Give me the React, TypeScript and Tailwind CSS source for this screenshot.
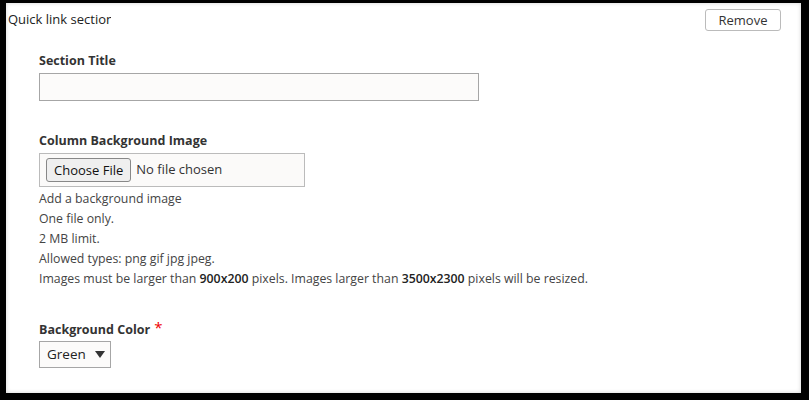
export default function App() {
  const font = { fontFamily: '"Open Sans", "Liberation Sans", sans-serif' }
  return (
    <div className="w-[809px] h-[400px] bg-black pt-[3px] pl-[6px] pr-[8px] pb-[7px]" style={font}>
      <div className="relative h-full w-full bg-white shadow-[inset_0_0_4px_rgba(0,0,0,0.18)]">
        <div className="flex items-start justify-between">
          <div className="mt-[8px] ml-[2px] w-[103px] overflow-hidden whitespace-nowrap text-[13px] leading-[16px] text-[#222]">
            Quick link section
          </div>
          <button className="mt-[6px] mr-[20px] h-[22px] w-[76px] rounded-[3px] border border-[#bbb] bg-white text-[13px] leading-[20px] text-[#333]">
            Remove
          </button>
        </div>

        <div className="pl-[33px]">
          <div className="mt-[22px] text-[12.5px] font-bold leading-[16px] text-[#333]">Section Title</div>
          <div className="mt-[4px] h-[28px] w-[440px] border border-[#a6a6a6] bg-[#fcfbfa]" />

          <div className="mt-[32px] text-[12.5px] font-bold leading-[16px] text-[#333]">Column Background Image</div>
          <div className="mt-[4px] flex h-[34px] w-[266px] items-center border border-[#bbb] bg-[#fbfaf9] pl-[6px]">
            <div className="h-[24px] rounded-[3px] border border-[#888] bg-[#efefef] px-[7px] text-[13px] leading-[22px] text-[#111]">
              Choose File
            </div>
            <span className="ml-[5px] text-[13px] text-[#333]">No file chosen</span>
          </div>
          <div className="mt-[2px] text-[12.3px] leading-[20px] text-[#444]">
            <div>Add a background image</div>
            <div>One file only.</div>
            <div>2 MB limit.</div>
            <div>Allowed types: png gif jpg jpeg.</div>
            <div>
              Images must be larger than <b className="font-semibold text-[#222]">900x200</b> pixels. Images larger than{' '}
              <b className="font-semibold text-[#222]">3500x2300</b> pixels will be resized.
            </div>
          </div>

          <div className="mt-[33px] flex items-start text-[12.5px] font-bold leading-[16px] text-[#333]">
            Background Color
            <span className="ml-[4px] -mt-[3px] text-[15px] font-normal text-[#e00]">*</span>
          </div>
          <div className="mt-[3px] flex h-[27px] w-[72px] items-center border border-[#a6a6a6] bg-[#fcfbfa] pl-[7px]">
            <span className="text-[13.5px] text-[#222]">Green</span>
            <svg className="ml-[9px]" width="10" height="7" viewBox="0 0 10 7">
              <path d="M0 0 L10 0 L5 7 Z" fill="#333" />
            </svg>
          </div>
        </div>
      </div>
    </div>
  )
}
